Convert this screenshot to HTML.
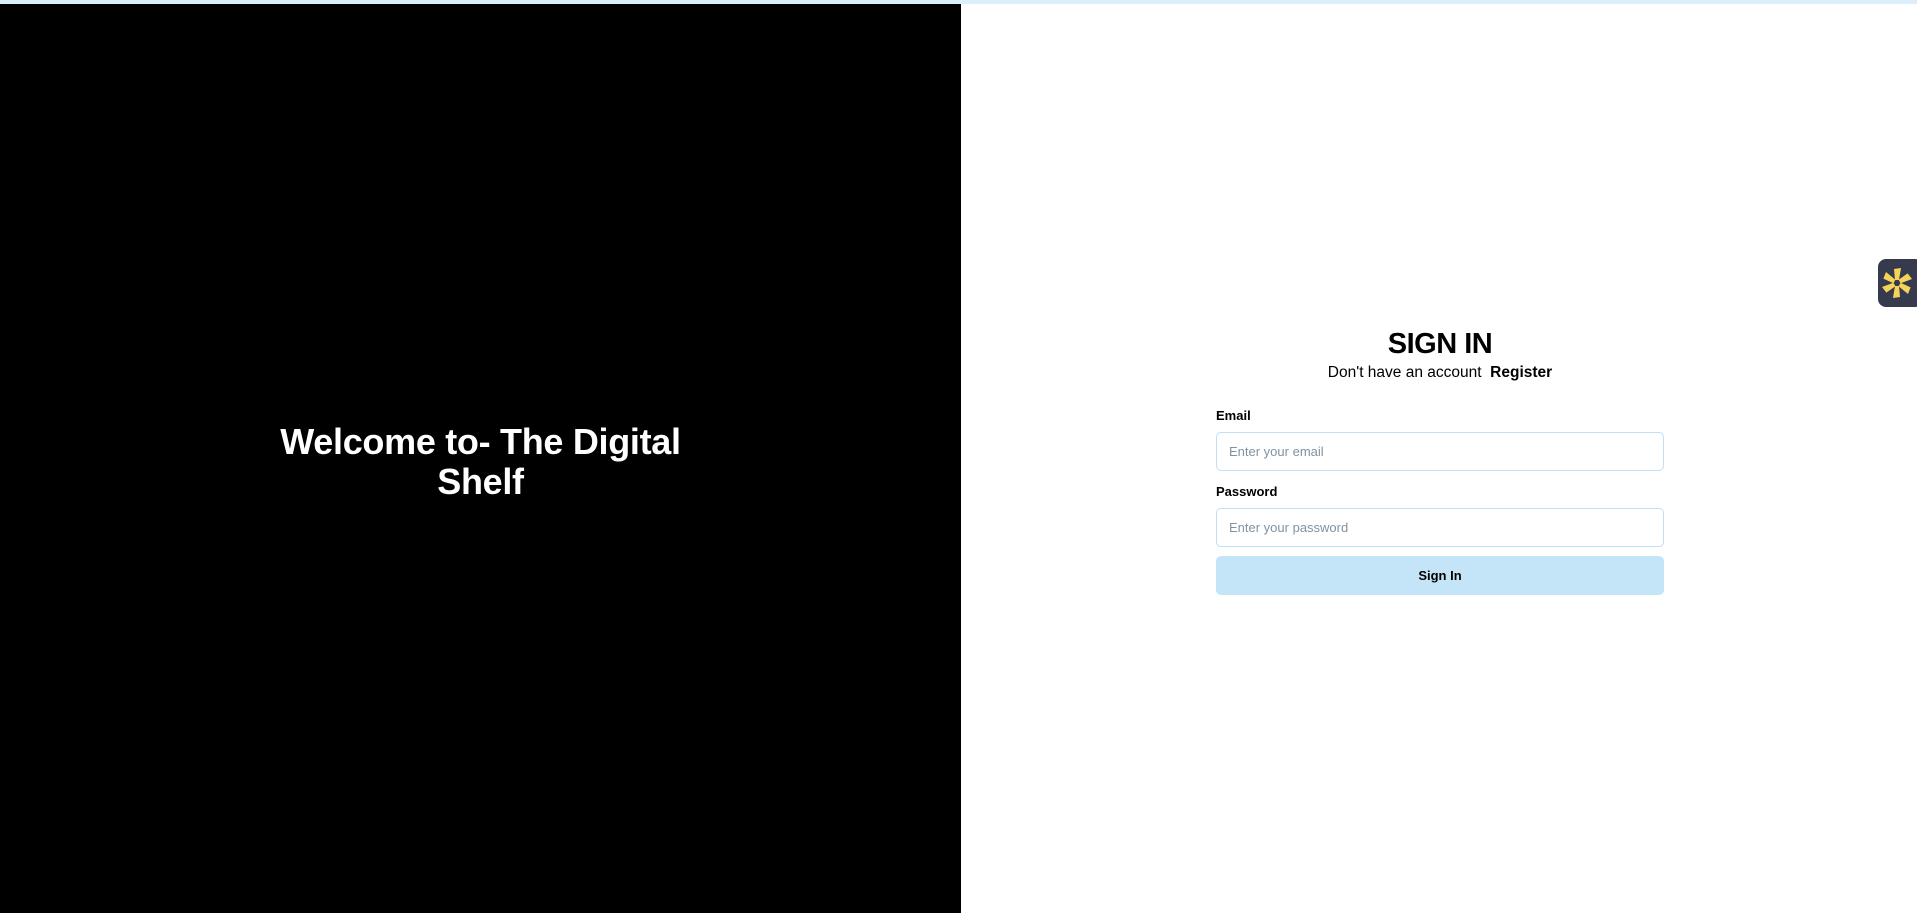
<!DOCTYPE html>
<html><head><style>
html,body{margin:0;padding:0;width:1917px;height:913px;overflow:hidden;background:#fff;font-family:"Liberation Sans",sans-serif;}
.top{position:absolute;left:0;top:0;width:1917px;height:4px;background:#dceef9;}
.left{position:absolute;left:0;top:4px;width:961px;height:909px;background:#000;}
.left h1{position:absolute;left:0;width:961px;top:418px;margin:0;text-align:center;color:#fff;font-size:36px;font-weight:bold;line-height:40px;letter-spacing:-0.3px;}
.title{position:absolute;left:1216px;width:448px;top:328px;text-align:center;font-size:29px;font-weight:bold;color:#000;letter-spacing:-0.5px;}
.sub{position:absolute;left:1216px;width:448px;top:364px;text-align:center;font-size:15.5px;color:#000;}
.lbl{position:absolute;left:1216px;font-size:13px;font-weight:bold;color:#000;}
.inp{position:absolute;left:1216px;width:446px;height:37px;border:1px solid #bfe0f5;border-radius:5px;}
.inp span{position:absolute;left:12px;top:11px;font-size:13px;color:#7f93a3;}
.btn{position:absolute;left:1216px;top:556px;width:448px;height:39px;background:#c4e5f7;border-radius:5px;text-align:center;line-height:39px;font-size:13px;font-weight:bold;color:#000;}
.wid{position:absolute;left:1878px;top:259px;width:45px;height:48px;background:#353b4c;border-radius:8px;}
</style></head><body>
<div class="top"></div>
<div class="left"><h1>Welcome to- The Digital<br>Shelf</h1></div>
<div class="title">SIGN IN</div>
<div class="sub">Don't have an account &nbsp;<b>Register</b></div>
<div class="lbl" style="top:408px">Email</div>
<div class="inp" style="top:432px"><span>Enter your email</span></div>
<div class="lbl" style="top:484px">Password</div>
<div class="inp" style="top:508px"><span>Enter your password</span></div>
<div class="btn">Sign In</div>
<div class="wid"><svg width="36" height="48" viewBox="0 0 36 48"><g transform="translate(19,24)" fill="#f5d35a">
<polygon points="-2,-3 2,-3 4,-15 -3,-14"/>
<polygon points="-2,-3 2,-3 4,-15 -3,-14" transform="rotate(60)"/>
<polygon points="-2,-3 2,-3 4,-15 -3,-14" transform="rotate(120)"/>
<polygon points="-2,-3 2,-3 4,-15 -3,-14" transform="rotate(180)"/>
<polygon points="-2,-3 2,-3 4,-15 -3,-14" transform="rotate(240)"/>
<polygon points="-2,-3 2,-3 4,-15 -3,-14" transform="rotate(300)"/>
</g></svg></div>
</body></html>
